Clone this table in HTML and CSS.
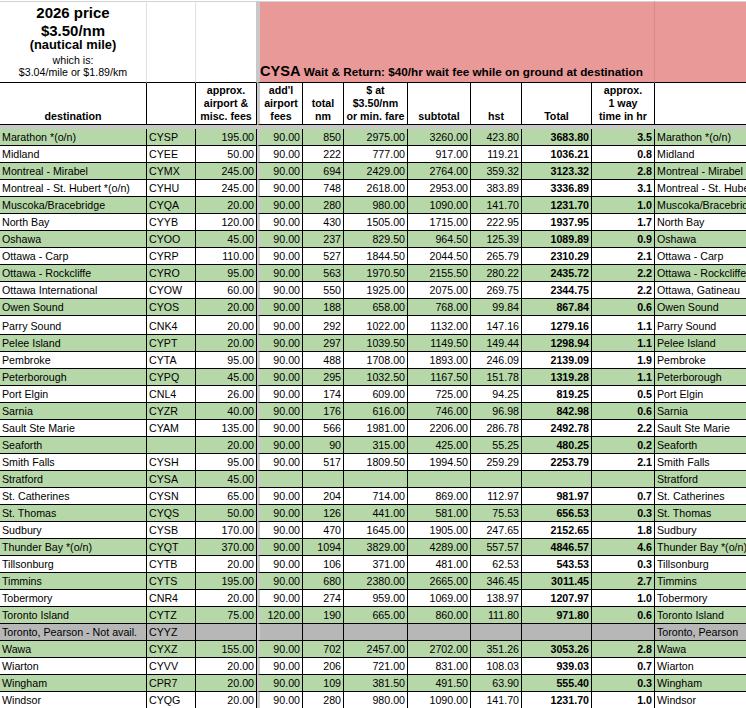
FILE: index.html
```html
<!DOCTYPE html>
<html lang="en">
<head>
<meta charset="utf-8">
<title>2026 price sheet</title>
<link rel="stylesheet" href="styles.css">
</head>
<body>
<div class="sheet">
  <div class="top">
    <div class="price">
      <div class="p1">2026 price</div>
      <div class="p2">$3.50/nm</div>
      <div class="p3">(nautical mile)</div>
      <div class="p4">which is:</div>
      <div class="p5">$3.04/mile or $1.89/km</div>
    </div>
    <div class="blank"></div>
    <div class="blank last"></div>
    <div class="banner"><span><span class="big">CYSA</span> Wait &amp; Return: $40/hr wait fee while on ground at destination</span></div>
    <div class="banner-end"></div>
  </div>
  <div class="head">
    <div><span>destination</span></div>
    <div><span></span></div>
    <div><span>approx.<br>airport &amp;<br>misc. fees</span></div>
    <div><span>add'l<br>airport<br>fees</span></div>
    <div><span>total<br>nm</span></div>
    <div><span>$ at<br>$3.50/nm<br>or min. fare</span></div>
    <div><span>subtotal</span></div>
    <div><span>hst</span></div>
    <div><span>Total</span></div>
    <div><span>approx.<br>1 way<br>time in hr</span></div>
    <div><span></span></div>
  </div>
  <div class="freeze"></div>

  <div class="row g"><span>Marathon *(o/n)</span><span>CYSP</span><span class="n">195.00</span><span class="n">90.00</span><span class="n">850</span><span class="n">2975.00</span><span class="n">3260.00</span><span class="n">423.80</span><span class="n b">3683.80</span><span class="n b">3.5</span><span>Marathon *(o/n)</span></div>
  <div class="row"><span>Midland</span><span>CYEE</span><span class="n">50.00</span><span class="n">90.00</span><span class="n">222</span><span class="n">777.00</span><span class="n">917.00</span><span class="n">119.21</span><span class="n b">1036.21</span><span class="n b">0.8</span><span>Midland</span></div>
  <div class="row g"><span>Montreal - Mirabel</span><span>CYMX</span><span class="n">245.00</span><span class="n">90.00</span><span class="n">694</span><span class="n">2429.00</span><span class="n">2764.00</span><span class="n">359.32</span><span class="n b">3123.32</span><span class="n b">2.8</span><span>Montreal - Mirabel</span></div>
  <div class="row"><span>Montreal - St. Hubert *(o/n)</span><span>CYHU</span><span class="n">245.00</span><span class="n">90.00</span><span class="n">748</span><span class="n">2618.00</span><span class="n">2953.00</span><span class="n">383.89</span><span class="n b">3336.89</span><span class="n b">3.1</span><span>Montreal - St. Hubert *(o/n)</span></div>
  <div class="row g"><span>Muscoka/Bracebridge</span><span>CYQA</span><span class="n">20.00</span><span class="n">90.00</span><span class="n">280</span><span class="n">980.00</span><span class="n">1090.00</span><span class="n">141.70</span><span class="n b">1231.70</span><span class="n b">1.0</span><span>Muscoka/Bracebridge</span></div>
  <div class="row"><span>North Bay</span><span>CYYB</span><span class="n">120.00</span><span class="n">90.00</span><span class="n">430</span><span class="n">1505.00</span><span class="n">1715.00</span><span class="n">222.95</span><span class="n b">1937.95</span><span class="n b">1.7</span><span>North Bay</span></div>
  <div class="row g"><span>Oshawa</span><span>CYOO</span><span class="n">45.00</span><span class="n">90.00</span><span class="n">237</span><span class="n">829.50</span><span class="n">964.50</span><span class="n">125.39</span><span class="n b">1089.89</span><span class="n b">0.9</span><span>Oshawa</span></div>
  <div class="row"><span>Ottawa - Carp</span><span>CYRP</span><span class="n">110.00</span><span class="n">90.00</span><span class="n">527</span><span class="n">1844.50</span><span class="n">2044.50</span><span class="n">265.79</span><span class="n b">2310.29</span><span class="n b">2.1</span><span>Ottawa - Carp</span></div>
  <div class="row g"><span>Ottawa - Rockcliffe</span><span>CYRO</span><span class="n">95.00</span><span class="n">90.00</span><span class="n">563</span><span class="n">1970.50</span><span class="n">2155.50</span><span class="n">280.22</span><span class="n b">2435.72</span><span class="n b">2.2</span><span>Ottawa - Rockcliffe</span></div>
  <div class="row"><span>Ottawa International</span><span>CYOW</span><span class="n">60.00</span><span class="n">90.00</span><span class="n">550</span><span class="n">1925.00</span><span class="n">2075.00</span><span class="n">269.75</span><span class="n b">2344.75</span><span class="n b">2.2</span><span>Ottawa, Gatineau</span></div>
  <div class="row g"><span>Owen Sound</span><span>CYOS</span><span class="n">20.00</span><span class="n">90.00</span><span class="n">188</span><span class="n">658.00</span><span class="n">768.00</span><span class="n">99.84</span><span class="n b">867.84</span><span class="n b">0.6</span><span>Owen Sound</span></div>
  <div class="row tall"><span>Parry Sound</span><span>CNK4</span><span class="n">20.00</span><span class="n">90.00</span><span class="n">292</span><span class="n">1022.00</span><span class="n">1132.00</span><span class="n">147.16</span><span class="n b">1279.16</span><span class="n b">1.1</span><span>Parry Sound</span></div>
  <div class="row g"><span>Pelee Island</span><span>CYPT</span><span class="n">20.00</span><span class="n">90.00</span><span class="n">297</span><span class="n">1039.50</span><span class="n">1149.50</span><span class="n">149.44</span><span class="n b">1298.94</span><span class="n b">1.1</span><span>Pelee Island</span></div>
  <div class="row"><span>Pembroke</span><span>CYTA</span><span class="n">95.00</span><span class="n">90.00</span><span class="n">488</span><span class="n">1708.00</span><span class="n">1893.00</span><span class="n">246.09</span><span class="n b">2139.09</span><span class="n b">1.9</span><span>Pembroke</span></div>
  <div class="row g"><span>Peterborough</span><span>CYPQ</span><span class="n">45.00</span><span class="n">90.00</span><span class="n">295</span><span class="n">1032.50</span><span class="n">1167.50</span><span class="n">151.78</span><span class="n b">1319.28</span><span class="n b">1.1</span><span>Peterborough</span></div>
  <div class="row"><span>Port Elgin</span><span>CNL4</span><span class="n">26.00</span><span class="n">90.00</span><span class="n">174</span><span class="n">609.00</span><span class="n">725.00</span><span class="n">94.25</span><span class="n b">819.25</span><span class="n b">0.5</span><span>Port Elgin</span></div>
  <div class="row g"><span>Sarnia</span><span>CYZR</span><span class="n">40.00</span><span class="n">90.00</span><span class="n">176</span><span class="n">616.00</span><span class="n">746.00</span><span class="n">96.98</span><span class="n b">842.98</span><span class="n b">0.6</span><span>Sarnia</span></div>
  <div class="row"><span>Sault Ste Marie</span><span>CYAM</span><span class="n">135.00</span><span class="n">90.00</span><span class="n">566</span><span class="n">1981.00</span><span class="n">2206.00</span><span class="n">286.78</span><span class="n b">2492.78</span><span class="n b">2.2</span><span>Sault Ste Marie</span></div>
  <div class="row g"><span>Seaforth</span><span></span><span class="n">20.00</span><span class="n">90.00</span><span class="n">90</span><span class="n">315.00</span><span class="n">425.00</span><span class="n">55.25</span><span class="n b">480.25</span><span class="n b">0.2</span><span>Seaforth</span></div>
  <div class="row"><span>Smith Falls</span><span>CYSH</span><span class="n">95.00</span><span class="n">90.00</span><span class="n">517</span><span class="n">1809.50</span><span class="n">1994.50</span><span class="n">259.29</span><span class="n b">2253.79</span><span class="n b">2.1</span><span>Smith Falls</span></div>
  <div class="row g"><span>Stratford</span><span>CYSA</span><span class="n">45.00</span><span></span><span></span><span></span><span></span><span></span><span></span><span></span><span>Stratford</span></div>
  <div class="row"><span>St. Catherines</span><span>CYSN</span><span class="n">65.00</span><span class="n">90.00</span><span class="n">204</span><span class="n">714.00</span><span class="n">869.00</span><span class="n">112.97</span><span class="n b">981.97</span><span class="n b">0.7</span><span>St. Catherines</span></div>
  <div class="row g"><span>St. Thomas</span><span>CYQS</span><span class="n">50.00</span><span class="n">90.00</span><span class="n">126</span><span class="n">441.00</span><span class="n">581.00</span><span class="n">75.53</span><span class="n b">656.53</span><span class="n b">0.3</span><span>St. Thomas</span></div>
  <div class="row"><span>Sudbury</span><span>CYSB</span><span class="n">170.00</span><span class="n">90.00</span><span class="n">470</span><span class="n">1645.00</span><span class="n">1905.00</span><span class="n">247.65</span><span class="n b">2152.65</span><span class="n b">1.8</span><span>Sudbury</span></div>
  <div class="row g"><span>Thunder Bay *(o/n)</span><span>CYQT</span><span class="n">370.00</span><span class="n">90.00</span><span class="n">1094</span><span class="n">3829.00</span><span class="n">4289.00</span><span class="n">557.57</span><span class="n b">4846.57</span><span class="n b">4.6</span><span>Thunder Bay *(o/n)</span></div>
  <div class="row"><span>Tillsonburg</span><span>CYTB</span><span class="n">20.00</span><span class="n">90.00</span><span class="n">106</span><span class="n">371.00</span><span class="n">481.00</span><span class="n">62.53</span><span class="n b">543.53</span><span class="n b">0.3</span><span>Tillsonburg</span></div>
  <div class="row g"><span>Timmins</span><span>CYTS</span><span class="n">195.00</span><span class="n">90.00</span><span class="n">680</span><span class="n">2380.00</span><span class="n">2665.00</span><span class="n">346.45</span><span class="n b">3011.45</span><span class="n b">2.7</span><span>Timmins</span></div>
  <div class="row"><span>Tobermory</span><span>CNR4</span><span class="n">20.00</span><span class="n">90.00</span><span class="n">274</span><span class="n">959.00</span><span class="n">1069.00</span><span class="n">138.97</span><span class="n b">1207.97</span><span class="n b">1.0</span><span>Tobermory</span></div>
  <div class="row g"><span>Toronto Island</span><span>CYTZ</span><span class="n">75.00</span><span class="n">120.00</span><span class="n">190</span><span class="n">665.00</span><span class="n">860.00</span><span class="n">111.80</span><span class="n b">971.80</span><span class="n b">0.6</span><span>Toronto Island</span></div>
  <div class="row x"><span>Toronto, Pearson - Not avail.</span><span>CYYZ</span><span></span><span></span><span></span><span></span><span></span><span></span><span></span><span></span><span>Toronto, Pearson</span></div>
  <div class="row g"><span>Wawa</span><span>CYXZ</span><span class="n">155.00</span><span class="n">90.00</span><span class="n">702</span><span class="n">2457.00</span><span class="n">2702.00</span><span class="n">351.26</span><span class="n b">3053.26</span><span class="n b">2.8</span><span>Wawa</span></div>
  <div class="row"><span>Wiarton</span><span>CYVV</span><span class="n">20.00</span><span class="n">90.00</span><span class="n">206</span><span class="n">721.00</span><span class="n">831.00</span><span class="n">108.03</span><span class="n b">939.03</span><span class="n b">0.7</span><span>Wiarton</span></div>
  <div class="row g"><span>Wingham</span><span>CPR7</span><span class="n">20.00</span><span class="n">90.00</span><span class="n">109</span><span class="n">381.50</span><span class="n">491.50</span><span class="n">63.90</span><span class="n b">555.40</span><span class="n b">0.3</span><span>Wingham</span></div>
  <div class="row"><span>Windsor</span><span>CYQG</span><span class="n">20.00</span><span class="n">90.00</span><span class="n">280</span><span class="n">980.00</span><span class="n">1090.00</span><span class="n">141.70</span><span class="n b">1231.70</span><span class="n b">1.0</span><span>Windsor</span></div>
</div>
</body>
</html>
```

FILE: styles.css
```css
:root {
  --cols: 147px 49px 61px 46px 41px 64px 63px 51px 70px 63px 120px;
  --green: #b6d7a8;
  --pink: #ea9999;
  --freeze: #c8c8c8;
  --grid: #e1e1e1;
}

* { box-sizing: border-box; }

html, body {
  margin: 0;
  padding: 0;
  background: #fff;
}

body {
  width: 746px;
  height: 708px;
  overflow: hidden;
  font-family: "Liberation Sans", Arial, sans-serif;
  font-size: 10.67px;
  color: #000;
}

.sheet {
  width: 775px;
  padding-top: 1px;
}

/* title row */
.top {
  display: grid;
  grid-template-columns: var(--cols);
  height: 82px;
}

.top > div {
  border-top: 1px solid #d2d2d2;
  border-bottom: 1px solid #000;
}

.price {
  border-right: 1px solid var(--grid);
  text-align: center;
  white-space: nowrap;
}

.p1 { font-size: 15px; font-weight: bold; line-height: 22px; }
.p2 { font-size: 15px; font-weight: bold; line-height: 13.4px; }
.p3 { font-size: 12.9px; font-weight: bold; line-height: 16px; }
.p4 { line-height: 14.2px; }
.p5 { line-height: 9.2px; }

.blank { border-right: 1px solid var(--grid); }
.blank.last { border-right-color: var(--freeze); }

.banner {
  grid-column: 4 / 11;
  background: var(--pink);
  border-left: 3px solid var(--freeze);
  border-right: 1px solid #d48b8b;
  display: flex;
  align-items: flex-end;
  padding-bottom: 2px;
  font-size: 11.75px;
  font-weight: bold;
  line-height: 16px;
  white-space: nowrap;
}

.banner .big { font-size: 14.6px; }

.banner-end { background: var(--pink); }

/* header row */
.head {
  display: grid;
  grid-template-columns: var(--cols);
  height: 42px;
}

.head > div {
  border-right: 1px solid #000;
  border-bottom: 1px solid #000;
  display: flex;
  align-items: flex-end;
  justify-content: center;
  padding-bottom: 1px;
  font-weight: bold;
  line-height: 13px;
  text-align: center;
  white-space: nowrap;
}

.head > div:nth-child(4) { border-left: 3px solid var(--freeze); }

.freeze {
  height: 4px;
  background: var(--freeze);
}

/* data rows */
.row {
  display: grid;
  grid-template-columns: var(--cols);
  height: 17px;
}

.row > span {
  border-right: 1px solid #000;
  border-bottom: 1px solid #000;
  line-height: 16px;
  padding: 0 2px;
  white-space: nowrap;
  overflow: hidden;
}

.row > span:nth-child(4) { border-left: 3px solid var(--freeze); }

.row.tall { height: 19px; }
.row.tall > span { padding-top: 2px; }

.n { text-align: right; }
.b { font-weight: bold; }

.g { background: var(--green); }
.x { background: #b7b7b7; }
```
